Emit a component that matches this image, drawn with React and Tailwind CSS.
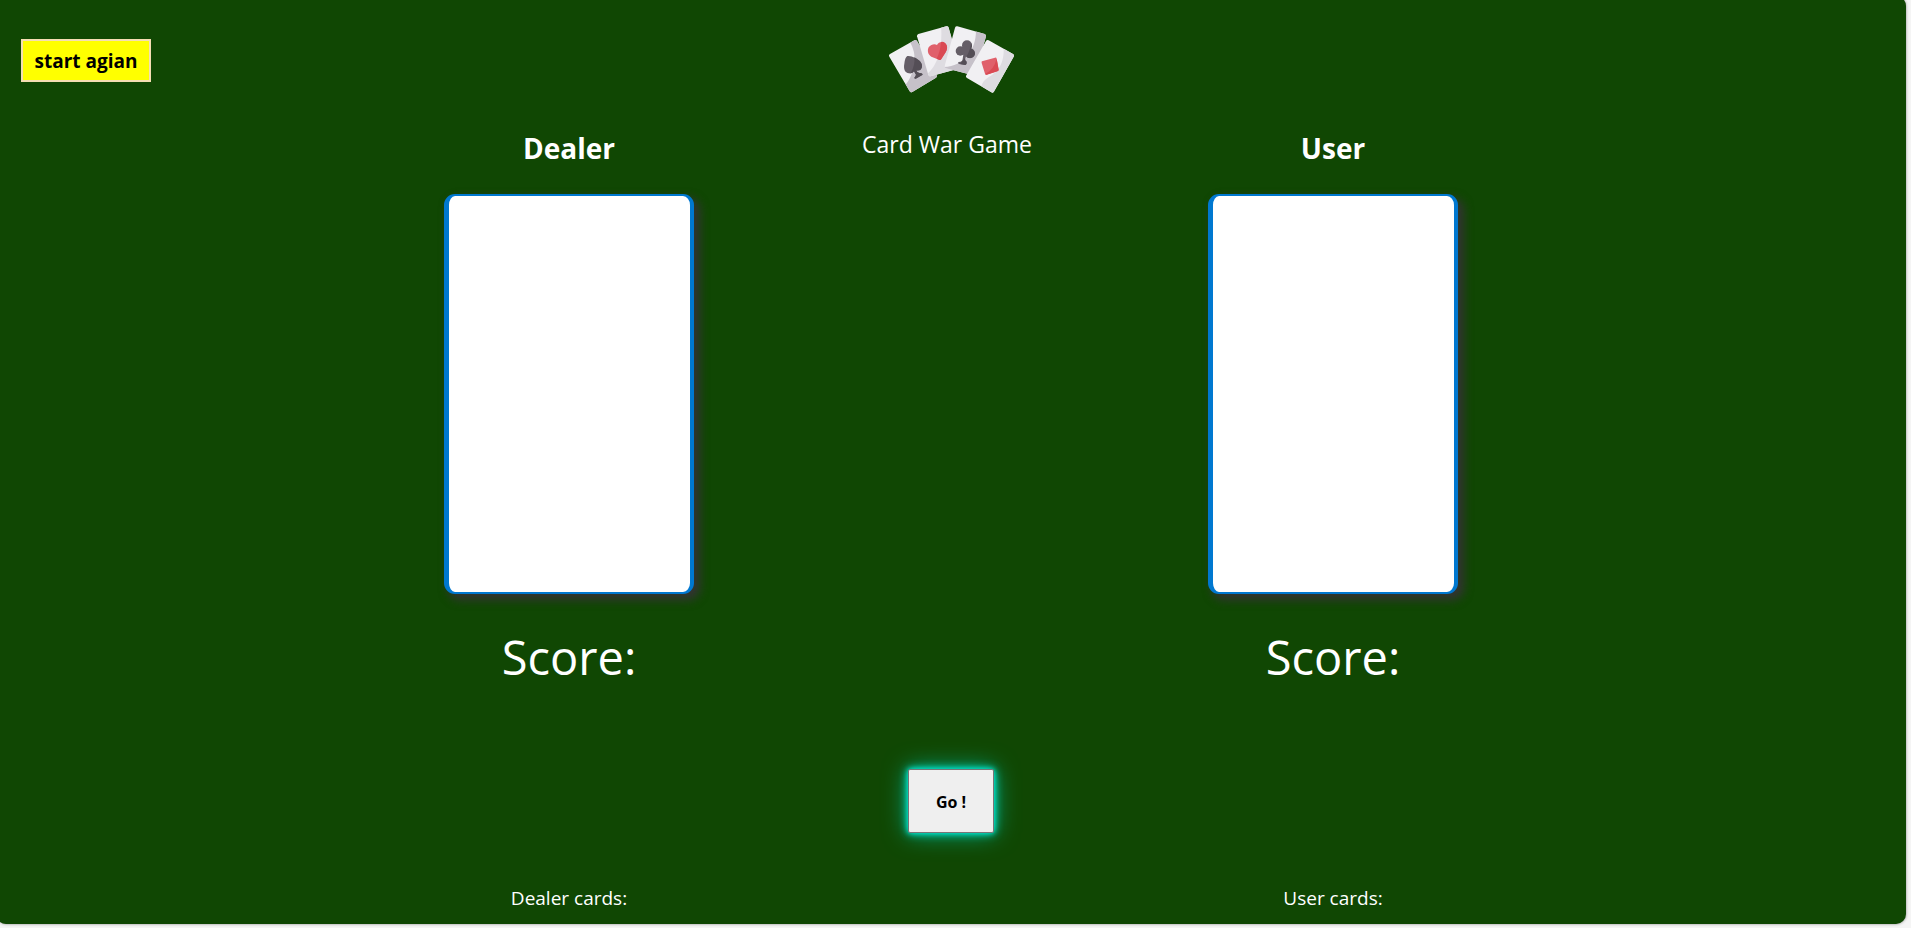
function CardFan() {
  return (
    <svg viewBox="84 48 381 204" className="h-[68px] w-[127px]" role="img" aria-label="Playing cards">
      <defs>
        <clipPath id="spadeCard"><path d="M90 132 163 91Q168 88 171 93L230 196Q232 200 228 203L157 246Q152 249 149 244L88 140Q85 135 90 132Z" /></clipPath>
        <clipPath id="heartCard"><path d="M175 72 259 49Q264 48 266 53L300 175 212 199Q207 200 205 195L171 79Q170 74 175 72Z" /></clipPath>
        <clipPath id="clubCard"><path d="M292 49 374 72Q379 74 378 79L346 192Q344 197 339 196L258 175Q253 173 254 168L285 53Q287 48 292 49Z" /></clipPath>
        <clipPath id="diamondCard"><path d="M386 91 459 132Q464 135 461 140L402 245Q399 250 394 247L321 204Q316 201 319 196L378 93Q381 88 386 91Z" /></clipPath>
      </defs>
      <g clipPath="url(#spadeCard)">
        <path fill="#f1f0f3" d="M80 80h160v180H80z" />
        <path fill="#c6c1c9" d="M151 98C158 112 166 128 163 158 159 192 145 215 136 224L152 252 240 210 172 84Z" />
      </g>
      <path fill="#655e67" d="M142 138Q154 137 164 143C178 150 190 160 185 174Q181 184 169 181Q171 190 180 189Q188 189 188 194L170 205Q164 208 163 203Q167 198 168 194L162 184Q157 192 147 190C134 188 130 176 133 161Q135 142 142 138Z" />
      <path fill="#544e56" d="M163 142C178 150 190 160 185 174Q181 184 169 181Q171 190 180 189Q188 189 188 194L170 205Q164 208 163 203Q167 198 168 194L162 184Q158 190 152 190 166 165 163 142Z" />
      <g clipPath="url(#heartCard)">
        <path fill="#f1f0f3" d="M165 40h145v170H165z" />
        <path fill="#dedce1" d="M243 45C246 82 243 116 234 142 226 165 214 182 203 191L210 204 305 180 264 40Z" />
      </g>
      <path fill="#e0606b" d="M231 105C235 96 247 93 255 99 263 106 263 117 257 127L244 147Q242 151 237 149L214 140C204 134 201 122 206 112 213 103 224 101 231 105Z" />
      <path fill="#da4a54" d="M243 96Q249 94 255 99C263 106 263 117 257 127L244 147Q242 151 237 149L230 146Q241 124 243 96Z" />
      <g clipPath="url(#clubCard)">
        <path fill="#f1f0f3" d="M245 40h145v170H245z" />
        <path fill="#c6c1c9" d="M348 60C348 94 338 118 322 137 304 158 282 170 250 171L260 184 350 205 385 70Z" />
      </g>
      <g fill="#655e67">
        <circle cx="321" cy="106" r="15" />
        <circle cx="301" cy="123" r="14" />
        <circle cx="330" cy="130" r="15" />
        <path d="M309 107 330 111 328 134 318 138Q312 151 320 155 321 163 316 165L297 162Q293 160 295 156 304 156 307 152L310 134 301 125Z" />
      </g>
      <path fill="#544e56" d="M334 99Q338 107 334 116 345 121 345 132 340 147 323 143L317 138Q312 151 320 155 321 163 316 165L300 162Q304 158 307 152 327 138 334 99Z" />
      <g clipPath="url(#diamondCard)">
        <path fill="#f1f0f3" d="M310 80h160v175H310z" />
        <path fill="#dedce1" d="M431 116C432 146 424 170 407 186 390 202 370 206 364 229L396 253 470 135 440 115Z" />
      </g>
      <path fill="#e0606b" d="M366 154 405 143Q409 142 410 146L416 179Q416 183 412 184L380 194Q376 195 375 191L365 159Q364 155 366 154Z" />
      <path fill="#da4a54" d="M410 146 416 179Q416 183 412 184L380 194Q377 195 376 192 402 178 410 146Z" />
    </svg>
  );
}

function Player({ name }) {
  return (
    <section className="flex flex-col items-center">
      <h2 className="mt-[132px] text-[28px] leading-10 font-bold">{name}</h2>
      <div className="mt-[26px] h-[400px] w-[250px] rounded-[11px] border-y-2 border-r-4 border-l-[5px] border-[#0078d0] bg-white shadow-[5px_5px_10px_1px_#333333]" />
      <p className="mt-[29px] text-[47px] leading-[68px]">Score:</p>
    </section>
  );
}

export default function App() {
  return (
    <div className="min-h-screen overflow-hidden bg-[#f5f5f5] pb-[3px] font-['Open_Sans','Noto_Sans',sans-serif] text-white">
      <main className="-mt-1 mr-[5px] -ml-1 rounded-[10px] bg-[#104703] pb-[11px] shadow-[0_0_3px_#888888]">
        <div className="grid grid-cols-5">
          <div className="pt-[43px] pl-[25px]">
            <button type="button" className="h-[43px] w-[130px] border-2 border-[#f5deb3] bg-[#ffff00] pt-px text-[19px] leading-6 font-bold text-black">
              start agian
            </button>
          </div>
          <Player name="Dealer" />
          <header className="flex flex-col items-center pt-[30px]">
            <CardFan />
            <h1 className="mt-[34px] pr-2 text-[23px] leading-8">Card War Game</h1>
          </header>
          <Player name="User" />
        </div>
        <div className="mt-[78px] flex justify-center">
          <button type="button" className="h-16 w-[86px] rounded-[2px] border border-[#767676] bg-[#efefef] pt-px text-base font-bold text-black shadow-[0_0_5px_#03e9d4,0_0_10px_#03e9d4,0_0_25px_#03b090]">
            Go !
          </button>
        </div>
        <div className="mt-[50px] grid grid-cols-5 text-center text-[19px] leading-[30px]">
          <p className="col-start-2">Dealer cards:</p>
          <p className="col-start-4">User cards:</p>
        </div>
      </main>
    </div>
  );
}
